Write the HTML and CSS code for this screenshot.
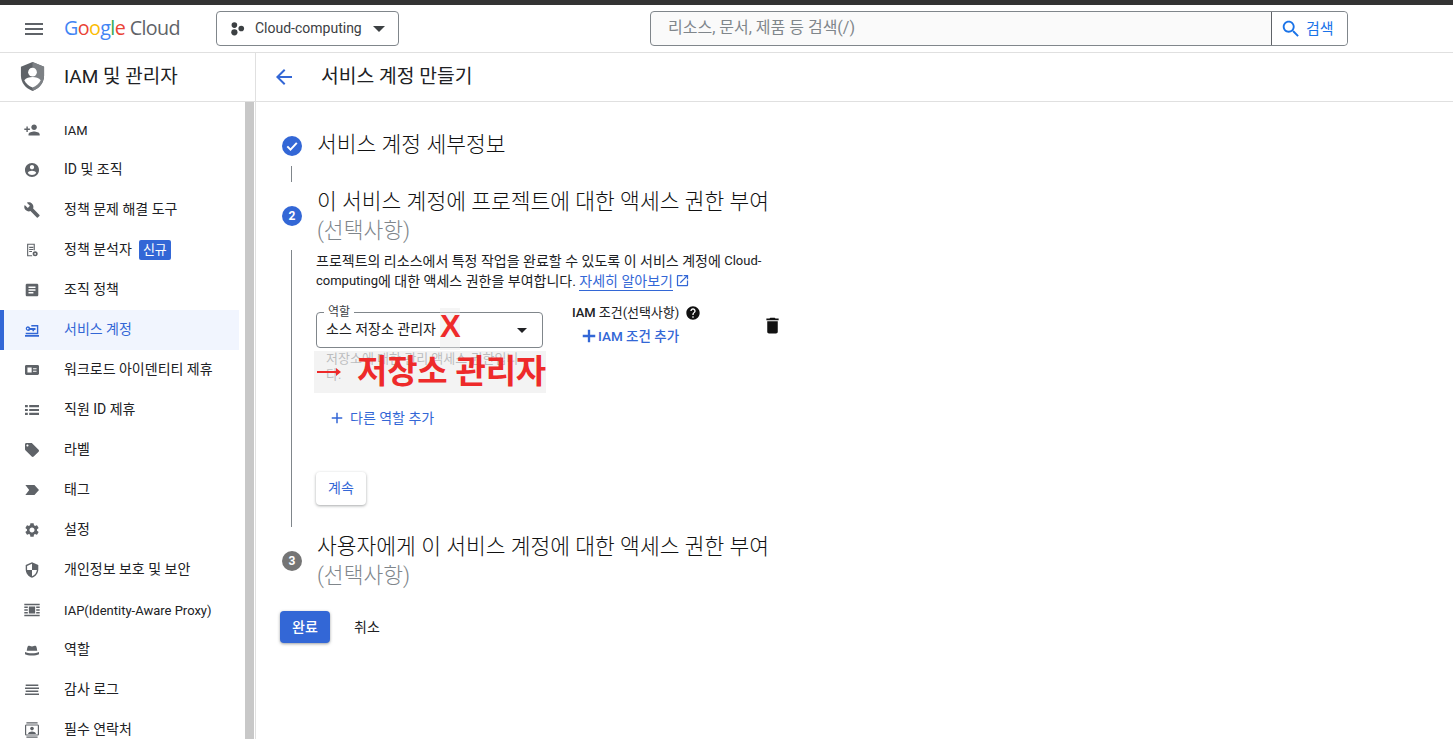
FILE: index.html
```html
<!DOCTYPE html>
<html lang="ko">
<head>
<meta charset="utf-8">
<title>서비스 계정 만들기</title>
<link rel="stylesheet" href="styles.css">
</head>
<body>
<svg class="defs" aria-hidden="true">
  <symbol id="i-person-add" viewBox="0 0 24 24"><path d="M15 12c2.21 0 4-1.79 4-4s-1.79-4-4-4-4 1.79-4 4 1.79 4 4 4zm-9-2V7H4v3H1v2h3v3h2v-3h3v-2H6zm9 4c-2.67 0-8 1.34-8 4v2h16v-2c0-2.66-5.33-4-8-4z"/></symbol>
  <symbol id="i-account" viewBox="0 0 24 24"><path d="M12 2C6.48 2 2 6.48 2 12s4.48 10 10 10 10-4.48 10-10S17.52 2 12 2zm0 3c1.66 0 3 1.34 3 3s-1.34 3-3 3-3-1.34-3-3 1.34-3 3-3zm0 14.2c-2.5 0-4.71-1.28-6-3.22.03-1.99 4-3.08 6-3.08 1.99 0 5.97 1.09 6 3.08-1.29 1.94-3.5 3.22-6 3.22z"/></symbol>
  <symbol id="i-build" viewBox="0 0 24 24"><path d="M22.7 19l-9.1-9.1c.9-2.3.4-5-1.5-6.9-2-2-5-2.4-7.4-1.3L9 6 6 9 1.6 4.7C.4 7.1.9 10.1 2.9 12.1c1.9 1.9 4.6 2.4 6.9 1.5l9.1 9.1c.4.4 1 .4 1.4 0l2.3-2.3c.5-.4.5-1.1.1-1.4z"/></symbol>
  <symbol id="i-analyzer" viewBox="0 0 24 24"><path d="M5 3h11v9.2h-1.6V4.6H6.6v14.8h5.6V21H5z"/><path d="M8 7.5h6v1.5H8zM8 10.5h6V12H8zM8 13.5h4V15H8z"/><circle cx="16.5" cy="17.5" r="3.6"/><circle cx="16.5" cy="17.5" r="1.2" fill="#fff"/></symbol>
  <symbol id="i-article" viewBox="0 0 24 24"><path d="M19 3H5c-1.1 0-2 .9-2 2v14c0 1.1.9 2 2 2h14c1.1 0 2-.9 2-2V5c0-1.1-.9-2-2-2zm-5 14H7v-2h7v2zm3-4H7v-2h10v2zm0-4H7V7h10v2z"/></symbol>
  <symbol id="i-service" viewBox="0 0 24 24"><path d="M11 5h10v13H3v-2h16V7h-8z"/><path d="M2 19h20v2.500H2z"/><path d="M6 6.500a3.500 3.500 0 0 1 3.400 2.500H17v3h-2v1.800h-2.400V12H9.400A3.500 3.500 0 1 1 6 6.500zm0 2.300a1.200 1.200 0 1 0 0 2.400 1.200 1.200 0 0 0 0-2.400z"/></symbol>
  <symbol id="i-workload" viewBox="0 0 24 24"><path fill-rule="evenodd" d="M4 5h16c1.1 0 2 .9 2 2v10c0 1.1-.9 2-2 2H4c-1.1 0-2-.9-2-2V7c0-1.1.9-2 2-2zm1.500 3.500v7h6v-7zm8 1v1.600h5V9.500zm0 3.400v1.600h5v-1.600z"/></symbol>
  <symbol id="i-list" viewBox="0 0 24 24"><path d="M2 5h4v3H2zM8 5h14v3H8zM2 10.500h4v3H2zM8 10.500h14v3H8zM2 16h4v3H2zM8 16h14v3H8z"/></symbol>
  <symbol id="i-label" viewBox="0 0 24 24"><path d="M21.41 11.58l-9-9C12.05 2.22 11.55 2 11 2H4c-1.1 0-2 .9-2 2v7c0 .55.22 1.050.59 1.420l9 9c.36.36.86.58 1.410.58.55 0 1.050-.22 1.410-.59l7-7c.37-.36.59-.86.59-1.410 0-.55-.23-1.060-.59-1.420zM5.500 7C4.670 7 4 6.330 4 5.500S4.670 4 5.500 4 7 4.670 7 5.500 6.330 7 5.500 7z"/></symbol>
  <symbol id="i-tag" viewBox="0 0 24 24"><path d="M2.500 5H15.500L22 12l-6.500 7H2.500L8 12z"/></symbol>
  <symbol id="i-settings" viewBox="0 0 24 24"><path d="M19.14 12.94c.04-.3.06-.61.06-.94 0-.32-.02-.64-.07-.94l2.03-1.58c.18-.14.23-.41.12-.61l-1.92-3.32c-.12-.22-.37-.29-.59-.22l-2.39.96c-.5-.38-1.03-.7-1.62-.94l-.36-2.54c-.04-.24-.24-.41-.48-.41h-3.84c-.24 0-.43.17-.47.41l-.36 2.54c-.59.24-1.13.57-1.62.94l-2.39-.96c-.22-.08-.47 0-.59.22L2.74 8.87c-.12.21-.08.47.12.61l2.03 1.58c-.05.3-.09.63-.09.94s.02.64.07.94l-2.03 1.58c-.18.14-.23.41-.12.61l1.92 3.32c.12.22.37.29.59.22l2.39-.96c.5.38 1.03.7 1.62.94l.36 2.54c.05.24.24.41.48.41h3.84c.24 0 .44-.17.47-.41l.36-2.54c.59-.24 1.13-.56 1.62-.94l2.39.96c.22.08.47 0 .59-.22l1.92-3.32c.12-.22.07-.47-.12-.61l-2.01-1.58zM12 15.600c-1.980 0-3.600-1.620-3.600-3.600s1.620-3.600 3.600-3.600 3.600 1.620 3.600 3.600-1.620 3.600-3.600 3.600z"/></symbol>
  <symbol id="i-security" viewBox="0 0 24 24"><path d="M12 1L3 5v6c0 5.550 3.840 10.740 9 12 5.160-1.260 9-6.450 9-12V5l-9-4zm0 10.990h7c-.53 4.120-3.280 7.790-7 8.940V12H5V6.300l7-3.110v8.800z"/></symbol>
  <symbol id="i-iap" viewBox="0 0 24 24"><path d="M1 3h22v2.200H1zM1 18.800h22V21H1zM1 7h5v2H1zM18 7h5v2h-5zM1 11h5v2H1zM18 11h5v2h-5zM1 15h5v2H1zM18 15h5v2h-5zM7.500 7h9v10h-9z"/></symbol>
  <symbol id="i-hat" viewBox="0 0 24 24"><path d="M7 6c1.500 0 3 1 5 1s3.500-1 5-1c1.500 0 2 4 2.500 7h-15C5 10 5.500 6 7 6z"/><path d="M2 15c2.500 1.300 6 1.800 10 1.800s7.500-.5 10-1.800v3c-2 1-6 2-10 2s-8-1-10-2z"/></symbol>
  <symbol id="i-lines" viewBox="0 0 24 24"><path d="M3 4h18v2.200H3zM2 8.300h20v2.200H2zM3 12.600h18v2.200H3zM2 17h20v2.200H2z"/></symbol>
  <symbol id="i-contact" viewBox="0 0 24 24"><path d="M4 1h16v1.700H4zM4 21.300h16V23H4z"/><path fill-rule="evenodd" d="M4 4h16c1.100 0 2 .9 2 2v12c0 1.100-.9 2-2 2H4c-1.100 0-2-.9-2-2V6c0-1.100.9-2 2-2zm0 1.700c-.2 0-.3.100-.3.300v12c0 .2.1.3.300.3h16c.2 0 .3-.1.300-.3V6c0-.2-.1-.3-.3-.3z"/><circle cx="12" cy="10" r="2.600"/><path d="M6.500 17c0-2 3.500-3 5.500-3s5.500 1 5.500 3v.8h-11z"/></symbol>
  <symbol id="i-delete" viewBox="0 0 24 24"><path d="M6 19c0 1.100.9 2 2 2h8c1.100 0 2-.9 2-2V7H6v12zM19 4h-3.500l-1-1h-5l-1 1H5v2h14V4z"/></symbol>
  <symbol id="i-help" viewBox="0 0 24 24"><path d="M12 2C6.480 2 2 6.480 2 12s4.480 10 10 10 10-4.480 10-10S17.520 2 12 2zm1 17h-2v-2h2v2zm2.070-7.750l-.9.920C13.450 12.900 13 13.500 13 15h-2v-.5c0-1.100.45-2.100 1.170-2.830l1.240-1.260c.37-.36.59-.86.59-1.410 0-1.100-.9-2-2-2s-2 .9-2 2H8c0-2.210 1.790-4 4-4s4 1.790 4 4c0 .88-.36 1.680-.93 2.250z"/></symbol>
  <symbol id="i-plus" viewBox="0 0 24 24"><path d="M19 13h-6v6h-2v-6H5v-2h6V5h2v6h6v2z"/></symbol>
  <symbol id="i-plus-bold" viewBox="0 0 24 24"><path d="M19.500 13.400h-6.100v6.100h-2.800v-6.100H4.500v-2.800h6.100V4.500h2.800v6.100h6.100z"/></symbol>
</svg>

<div class="topstrip"></div>

<header class="appbar">
  <svg class="menu" viewBox="0 0 24 24"><path d="M3 18h18v-2H3v2zm0-5h18v-2H3v2zm0-7v2h18V6H3z"/></svg>
  <div class="logo"><span class="g-b">G</span><span class="g-r">o</span><span class="g-y">o</span><span class="g-b">g</span><span class="g-g">l</span><span class="g-r">e</span> <span class="logo-cloud">Cloud</span></div>
  <button class="project">
    <svg class="project-icon" viewBox="0 0 24 24"><circle cx="7" cy="6.500" r="4.500"/><circle cx="18" cy="12" r="4.500"/><circle cx="7" cy="18" r="5"/></svg>
    <span class="project-name">Cloud-computing</span>
    <span class="caret"></span>
  </button>
  <div class="search">
    <span class="search-input">리소스, 문서, 제품 등 검색(/)</span>
    <span class="search-btn">
      <svg class="search-icon" viewBox="0 0 24 24"><path d="M15.500 14h-.79l-.28-.27C15.410 12.590 16 11.110 16 9.500 16 5.910 13.090 3 9.500 3S3 5.910 3 9.500 5.910 16 9.500 16c1.610 0 3.090-.59 4.230-1.570l.27.28v.79l5 4.990L20.490 19l-4.990-5zm-6 0C7.010 14 5 11.990 5 9.500S7.010 5 9.500 5 14 7.010 14 9.500 11.990 14 9.500 14z"/></svg>
      검색
    </span>
  </div>
</header>

<div class="shell">
  <aside class="side">
    <div class="side-head">
      <svg class="side-logo" viewBox="0 0 28 32"><path fill="#5f6368" d="M14 1 2 6v9c0 7.500 5 13.500 12 16 7-2.500 12-8.500 12-16V6z"/><path fill="#7d8185" d="M14 1v30c7-2.500 12-8.500 12-16V6z"/><circle cx="14" cy="11.500" r="4.500" fill="#fff"/><path fill="#fff" d="M5.500 20c1.500-2.500 5.500-3.500 8.500-3.500s7 1 8.500 3.500c-1.500 3-4.500 6-8.500 7.500-4-1.500-7-4.500-8.500-7.500z"/></svg>
      <span class="side-title">IAM 및 관리자</span>
    </div>
    <div class="side-body">
      <nav class="nav">
        <a class="nav-item latin"><svg class="nav-icon"><use href="#i-person-add"/></svg>IAM</a>
        <a class="nav-item"><svg class="nav-icon"><use href="#i-account"/></svg>ID 및 조직</a>
        <a class="nav-item"><svg class="nav-icon"><use href="#i-build"/></svg>정책 문제 해결 도구</a>
        <a class="nav-item"><svg class="nav-icon"><use href="#i-analyzer"/></svg>정책 분석자<span class="badge">신규</span></a>
        <a class="nav-item"><svg class="nav-icon"><use href="#i-article"/></svg>조직 정책</a>
        <a class="nav-item active"><svg class="nav-icon"><use href="#i-service"/></svg>서비스 계정</a>
        <a class="nav-item"><svg class="nav-icon"><use href="#i-workload"/></svg>워크로드 아이덴티티 제휴</a>
        <a class="nav-item"><svg class="nav-icon"><use href="#i-list"/></svg>직원 ID 제휴</a>
        <a class="nav-item"><svg class="nav-icon"><use href="#i-label"/></svg>라벨</a>
        <a class="nav-item"><svg class="nav-icon"><use href="#i-tag"/></svg>태그</a>
        <a class="nav-item"><svg class="nav-icon"><use href="#i-settings"/></svg>설정</a>
        <a class="nav-item"><svg class="nav-icon"><use href="#i-security"/></svg>개인정보 보호 및 보안</a>
        <a class="nav-item latin"><svg class="nav-icon"><use href="#i-iap"/></svg>IAP(Identity-Aware Proxy)</a>
        <a class="nav-item"><svg class="nav-icon"><use href="#i-hat"/></svg>역할</a>
        <a class="nav-item"><svg class="nav-icon"><use href="#i-lines"/></svg>감사 로그</a>
        <a class="nav-item"><svg class="nav-icon"><use href="#i-contact"/></svg>필수 연락처</a>
      </nav>
      <div class="scrollbar"></div>
    </div>
  </aside>

  <main class="main">
    <div class="page-head">
      <svg class="back" viewBox="0 0 24 24"><path d="M20 11H7.830l5.590-5.590L12 4l-8 8 8 8 1.410-1.410L7.830 13H20v-2z"/></svg>
      <h1 class="page-title">서비스 계정 만들기</h1>
    </div>

    <div class="content">
      <section class="step step-one">
        <div class="rail">
          <svg class="dot-check" viewBox="0 0 20 20"><circle cx="10" cy="10" r="10" fill="#3367d6"/><path d="M5.300 10.400l3.200 3.200 6.300-6.700" fill="none" stroke="#fff" stroke-width="2"/></svg>
        </div>
        <h2 class="step-title">서비스 계정 세부정보</h2>
      </section>
      <div class="connector connector-short"></div>

      <section class="step step-head">
        <div class="rail"><span class="dot">2</span></div>
        <h2 class="step-title">이 서비스 계정에 프로젝트에 대한 액세스 권한 부여<br><span class="optional">(선택사항)</span></h2>
      </section>

      <div class="step-panel">
        <p class="desc"><span class="desc-line">프로젝트의 리소스에서 특정 작업을 완료할 수 있도록 이 서비스 계정에 <span class="desc-latin">Cloud-</span></span><span class="desc-line"><span class="desc-latin">computing</span>에 대한 액세스 권한을 부여합니다. <a class="link">자세히 알아보기</a><svg class="ext" viewBox="0 0 24 24"><path d="M19 19H5V5h7V3H5c-1.110 0-2 .9-2 2v14c0 1.100.89 2 2 2h14c1.100 0 2-.9 2-2v-7h-2v7zM14 3v2h3.590l-9.830 9.830 1.410 1.410L19 6.410V10h2V3h-7z"/></svg></span></p>

        <div class="role-row">
          <div class="role-col">
            <div class="field">
              <span class="field-label">역할</span>
              <span class="field-value">소스 저장소 관리자</span>
              <span class="field-caret"></span>
            </div>
            <p class="helper">저장소에 대한 관리 액세스 권한입니<br>다.</p>
            <div class="note-x">X</div>
            <div class="note-box">
              <svg class="note-arrow" viewBox="0 0 24 10"><path d="M0 4h19V1l5 4-5 4V6H0z"/></svg>
              <span class="note-text">저장소 관리자</span>
            </div>
          </div>
          <div class="cond-col">
            <div class="cond-title"><span class="cond-text"><span class="cond-iam">IAM</span> 조건(선택사항)</span><svg class="help"><use href="#i-help"/></svg></div>
            <a class="cond-add"><svg class="plus-s"><use href="#i-plus-bold"/></svg>IAM 조건 추가</a>
          </div>
          <svg class="trash"><use href="#i-delete"/></svg>
        </div>

        <a class="add-role"><svg class="plus"><use href="#i-plus"/></svg>다른 역할 추가</a>
        <button class="btn-continue">계속</button>
      </div>

      <section class="step step-head step-three">
        <div class="rail"><span class="dot dot-off">3</span></div>
        <h2 class="step-title">사용자에게 이 서비스 계정에 대한 액세스 권한 부여<br><span class="optional">(선택사항)</span></h2>
      </section>

      <div class="actions">
        <button class="btn-done">완료</button>
        <button class="btn-cancel">취소</button>
      </div>
    </div>
  </main>
</div>
</body>
</html>
```
FILE: styles.css
```css
* { box-sizing: border-box; }
html, body { margin: 0; height: 739px; overflow: hidden; }
body {
  font-family: Roboto, "Noto Sans CJK KR", sans-serif;
  color: #202124;
  background: #fff;
  font-size: 13px;
}
.defs { display: none; }
h1, h2, p { margin: 0; font-weight: 400; }
button { font-family: inherit; cursor: pointer; }

.topstrip { height: 5px; background: #333; }

.appbar {
  height: 48px;
  display: flex;
  align-items: center;
  border-bottom: 1px solid #e0e0e0;
}
.menu { width: 24px; height: 24px; margin-left: 22px; fill: #5f6368; flex: none; }
.logo {
  margin-left: 18px;
  width: 132px;
  padding-bottom: 2px;
  font-family: "Open Sans", sans-serif;
  font-size: 19.7px;
  letter-spacing: -.6px;
  white-space: nowrap;
  color: #5f6368;
}
.g-b { color: #4285f4; }
.g-r { color: #ea4335; }
.g-y { color: #fbbc04; }
.g-g { color: #34a853; }
.logo-cloud { color: #5f6368; }
.project {
  margin-left: 20px;
  width: 183px;
  height: 35px;
  display: flex;
  align-items: center;
  background: #fff;
  border: 1px solid #80868b;
  border-radius: 4px;
  padding: 0 13px 0 13px;
}
.project-icon { width: 15px; height: 15px; fill: #3c4043; flex: none; }
.project-name { margin-left: 10px; padding-bottom: 2px; font-size: 14px; color: #3c4043; flex: 1; text-align: left; }
.caret, .field-caret {
  width: 0; height: 0;
  border-left: 6px solid transparent;
  border-right: 6px solid transparent;
  border-top: 6px solid #3c4043;
}
.search {
  margin-left: 251px;
  width: 698px;
  height: 35px;
  display: flex;
  border: 1px solid #80868b;
  border-radius: 4px;
  background: #fafafa;
}
.search-input { flex: 1; padding-left: 17px; line-height: 31px; font-size: 16px; color: #80868b; }
.search-btn {
  width: 76px;
  background: #fff;
  border-left: 1px solid #5f6368;
  border-radius: 0 4px 4px 0;
  display: flex;
  align-items: center;
  padding: 0 0 2px 8px;
  gap: 4px;
  font-size: 15px;
  color: #1a73e8;
}
.search-icon { width: 22px; height: 22px; fill: #1a73e8; flex: none; margin-top: 2px; }

.shell { display: flex; height: 686px; }

.side { width: 256px; flex: none; border-right: 1px solid #e0e0e0; display: flex; flex-direction: column; }
.side-head {
  height: 49px;
  flex: none;
  display: flex;
  align-items: center;
  padding-left: 19px;
  border-bottom: 1px solid #e0e0e0;
}
.side-logo { width: 27px; height: 31px; margin-top: -2px; flex: none; }
.side-title { margin: -5px 0 0 18px; font-size: 19px; color: #202124; }
.side-body { flex: 1; display: flex; min-height: 0; overflow: hidden; }
.nav { width: 239px; padding-top: 8px; flex: none; }
.scrollbar { width: 9px; margin-left: 6px; background: #c8c8c8; }
.nav-item {
  height: 40px;
  display: flex;
  align-items: center;
  padding: 0 0 5px 25px;
  font-size: 14px;
  color: #202124;
  white-space: nowrap;
}
.nav-item.latin { font-size: 13px; padding-bottom: 0; }
.nav-icon { width: 14px; height: 14px; margin: 5px 25px 0 0; fill: #5f6368; flex: none; overflow: visible; transform: scale(1.2); }
.nav-item.latin .nav-icon { margin-top: 0; }
.nav-item.active {
  background: #f1f5fe;
  color: #3367d6;
  border-left: 4px solid #3367d6;
  padding-left: 21px;
}
.nav-item.active .nav-icon { fill: #3367d6; }
.badge {
  margin: 5px 0 0 7px;
  height: 20px;
  padding: 0 4px;
  line-height: 19px;
  border-radius: 2px;
  background: #3367d6;
  color: #fff;
  font-size: 13px;
}

.main { flex: 1; min-width: 0; }
.page-head {
  height: 49px;
  display: flex;
  align-items: center;
  border-bottom: 1px solid #e0e0e0;
  padding-left: 16px;
}
.back { width: 24px; height: 24px; fill: #3367d6; flex: none; }
.page-title { margin: -5px 0 0 25px; font-size: 19.3px; color: #202124; }

.content { padding: 26px 0 0 25px; }
.step { display: flex; align-items: center; }
.step-one { height: 34px; }
.rail { width: 36px; padding-left: 1px; flex: none; display: flex; }
.dot-check { width: 20px; height: 20px; margin-top: 2px; }
.dot {
  width: 20px; height: 20px;
  border-radius: 50%;
  background: #3367d6;
  color: #fff;
  font-size: 12px;
  font-weight: 700;
  text-align: center;
  line-height: 20px;
}
.dot-off { background: #757575; }
.step-title { margin-top: -1px; font-size: 21.5px; line-height: 29px; font-weight: 300; color: #111; white-space: nowrap; }
.optional { color: #80868b; }
.connector { margin-left: 10px; width: 1px; background: #80868b; }
.connector-short { height: 16px; margin-top: 4px; margin-bottom: 5px; }

.step-head { height: 58px; }
.step-three { margin-top: 5px; }
.step-panel {
  margin-left: 10px;
  border-left: 1px solid #80868b;
  padding: 0 0 24px 24px;
  margin-top: 5px;
  height: 277px;
}
.desc { font-size: 14px; color: #202124; white-space: nowrap; }
.desc-line { display: flex; align-items: center; height: 20px; white-space: pre; }
.desc-latin { font-size: 13px; }
.link { color: #3367d6; border-bottom: 1px solid #3367d6; }
.ext { width: 15px; height: 15px; margin-left: 2px; fill: #3367d6; flex: none; }

.role-row { display: flex; margin-top: 22px; height: 88px; }
.role-col { position: relative; width: 227px; flex: none; }
.field {
  position: relative;
  height: 36px;
  border: 1px solid #80868b;
  border-radius: 4px;
  display: flex;
  align-items: center;
  padding: 0 15px 0 9px;
}
.field-label {
  position: absolute;
  top: -8px;
  left: 7px;
  padding: 0 4px;
  background: #fff;
  font-size: 12px;
  line-height: 14px;
  color: #3c4043;
}
.field-value { flex: 1; font-size: 14px; line-height: 18px; padding-bottom: 2px; color: #202124; }
.field-caret { border-left-width: 5px; border-right-width: 5px; border-top-width: 5px; border-top-color: #202124; }
.helper { margin-top: 3px; padding-left: 10px; font-size: 13px; line-height: 16px; color: #5f6368; white-space: nowrap; }
.note-x {
  position: absolute;
  top: -4px;
  left: 124px;
  width: 20px;
  height: 42px;
  background: rgba(232, 232, 232, .45);
  color: #ee2a2a;
  font-family: "Liberation Sans", sans-serif;
  font-size: 31px;
  font-weight: 700;
  line-height: 38px;
  text-align: center;
}
.note-box {
  position: absolute;
  top: 39px;
  left: -2px;
  width: 232px;
  height: 42px;
  background: rgba(236, 236, 236, .65);
  display: flex;
  align-items: center;
  color: #ee2a2a;
  font-weight: 700;
  white-space: nowrap;
}
.note-arrow { margin: 0 16px 0 3px; width: 24px; height: 10px; fill: #ee2a2a; flex: none; }
.note-text { font-size: 33px; line-height: 38px; letter-spacing: -.2px; }

.cond-col { margin-left: 29px; width: 190px; flex: none; }
.cond-title { font-size: 13px; line-height: 18px; color: #202124; display: flex; align-items: center; white-space: nowrap; margin-top: -8px; }
.cond-text { letter-spacing: -.05px; }
.cond-iam { font-weight: 500; }
.help { width: 16px; height: 16px; margin-left: 6px; fill: #111; flex: none; }
.cond-add { display: flex; align-items: center; margin: 4px 0 0 7px; color: #3367d6; font-size: 13.5px; font-weight: 500; line-height: 20px; white-space: nowrap; }
.plus-s { width: 20px; height: 20px; fill: #3367d6; flex: none; margin-right: -1px; }
.trash { width: 21px; height: 21px; margin-top: 3px; fill: #111; flex: none; }

.add-role { display: flex; align-items: center; margin-left: 12px; margin-top: 6px; color: #3367d6; font-size: 14px; line-height: 20px; height: 24px; }
.plus { width: 18px; height: 18px; fill: #3367d6; margin-right: 4px; flex: none; }
.btn-continue {
  display: block;
  margin-top: 42px;
  width: 50px;
  height: 33px;
  background: #fff;
  border: 0;
  border-radius: 4px;
  box-shadow: 0 1px 3px rgba(60, 64, 67, .45);
  color: #3367d6;
  font-size: 14px;
  padding: 0 0 3px;
}
.actions { margin-top: 21px; margin-left: -1px; display: flex; align-items: center; }
.btn-done {
  width: 50px;
  height: 32px;
  border: 0;
  border-radius: 4px;
  background: #3367d6;
  color: #fff;
  font-size: 14px;
  font-weight: 500;
  box-shadow: 0 1px 3px rgba(60, 64, 67, .5);
  padding: 0 0 3px;
}
.btn-cancel { margin-left: 24px; width: 26px; height: 32px; padding: 0 0 3px; border: 0; background: none; font-size: 14px; white-space: nowrap; color: #202124; }
```
